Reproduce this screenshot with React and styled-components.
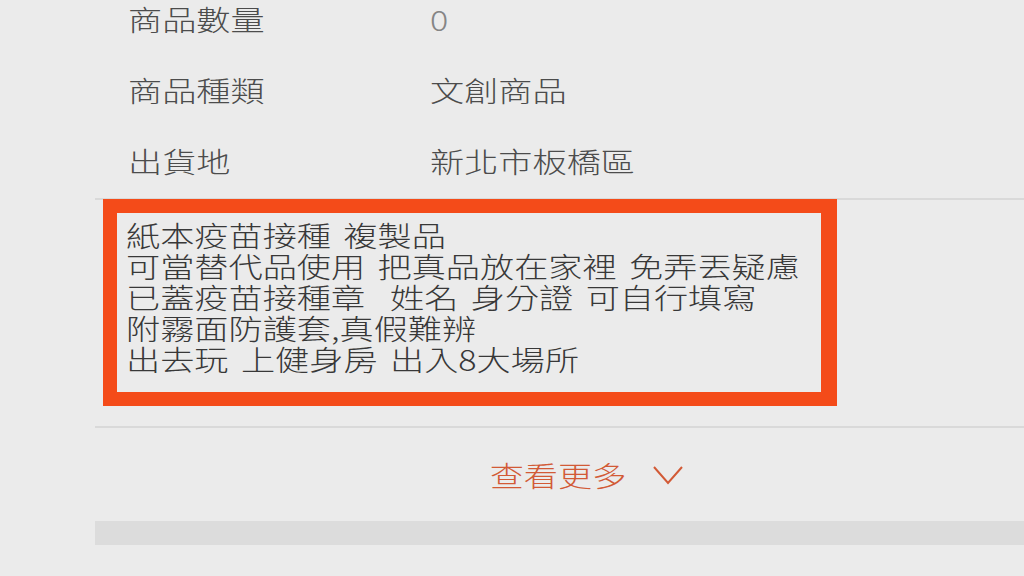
import React from 'react';
import styled, { createGlobalStyle } from 'styled-components';

const GlobalStyle = createGlobalStyle`
    html, body {
        margin: 0;
        padding: 0;
        background: #ebebeb;
        overflow: hidden;
    }
    body {
        font-family: "Noto Sans CJK TC", "Noto Sans", sans-serif;
        font-weight: 300;
    }
`;

const Screen = styled.div`
    width: 1024px;
    height: 576px;
    overflow: hidden;
    background: #ebebeb;
    padding-left: 95px;
    box-sizing: border-box;
`;

const Panel = styled.div`
    margin-top: -15px;
    display: flex;
    flex-direction: column;
`;

// the capture is a phone screen stretched sideways, so text is widened
const Wide = styled.span`
    display: inline-block;
    transform: scaleX(1.22);
    transform-origin: ${(p) => (p.$center ? 'center' : 'left')} center;
`;

const InfoRow = styled.div`
    display: grid;
    grid-template-columns: 302px 1fr;
    align-items: center;
    height: 71px;
    box-sizing: border-box;
    padding: 0 0 4px 33px;
    font-size: 28px;
    color: #4c4c4c;
`;

const Value = styled(Wide)`
    color: ${(p) => (p.$light ? '#858585' : '#4c4c4c')};
`;

const DescSection = styled.div`
    border-top: 2px solid #d9d9d9;
    border-bottom: 2px solid #d9d9d9;
    padding-bottom: 20px;
`;

const Highlight = styled.div`
    margin: -1px 0 0 8px;
    width: 734px;
    height: 207px;
    box-sizing: border-box;
    border: 14px solid #f44b19;
    border-right-width: 16px;
    padding: 7px 0 0 9px;
    overflow: hidden;
`;

const DescText = styled(Wide)`
    font-size: 28px;
    line-height: 31px;
    color: #383838;
    word-spacing: 4px;
    white-space: pre;
`;

const MoreRow = styled.div`
    height: 93px;
    display: flex;
    align-items: center;
    justify-content: center;
    gap: 38px;
    padding-left: 67px;
    color: #d25a36;
    font-size: 28px;
`;

const Band = styled.div`
    height: 24px;
    background: #dcdcdc;
`;

const desc = [
    '紙本疫苗接種 複製品',
    '可當替代品使用 把真品放在家裡 免弄丟疑慮',
    '已蓋疫苗接種章  姓名 身分證 可自行填寫',
    '附霧面防護套,真假難辨',
    '出去玩 上健身房 出入8大場所',
];

const Chevron = () => (
    <svg width="32" height="20" viewBox="0 0 32 20">
        <polyline points="2,2 16,18 30,2" fill="none" stroke="#d25a36" strokeWidth="2" />
    </svg>
);

export default function App() {
    return (
        <Screen>
            <GlobalStyle />
            <Panel>
                <InfoRow>
                    <Wide>商品數量</Wide>
                    <Value $light>0</Value>
                </InfoRow>
                <InfoRow>
                    <Wide>商品種類</Wide>
                    <Value>文創商品</Value>
                </InfoRow>
                <InfoRow>
                    <Wide>出貨地</Wide>
                    <Value>新北市板橋區</Value>
                </InfoRow>
                <DescSection>
                    <Highlight>
                        <DescText>{desc.join('\n')}</DescText>
                    </Highlight>
                </DescSection>
                <MoreRow>
                    <Wide $center>查看更多</Wide>
                    <Chevron />
                </MoreRow>
                <Band />
            </Panel>
        </Screen>
    );
}
